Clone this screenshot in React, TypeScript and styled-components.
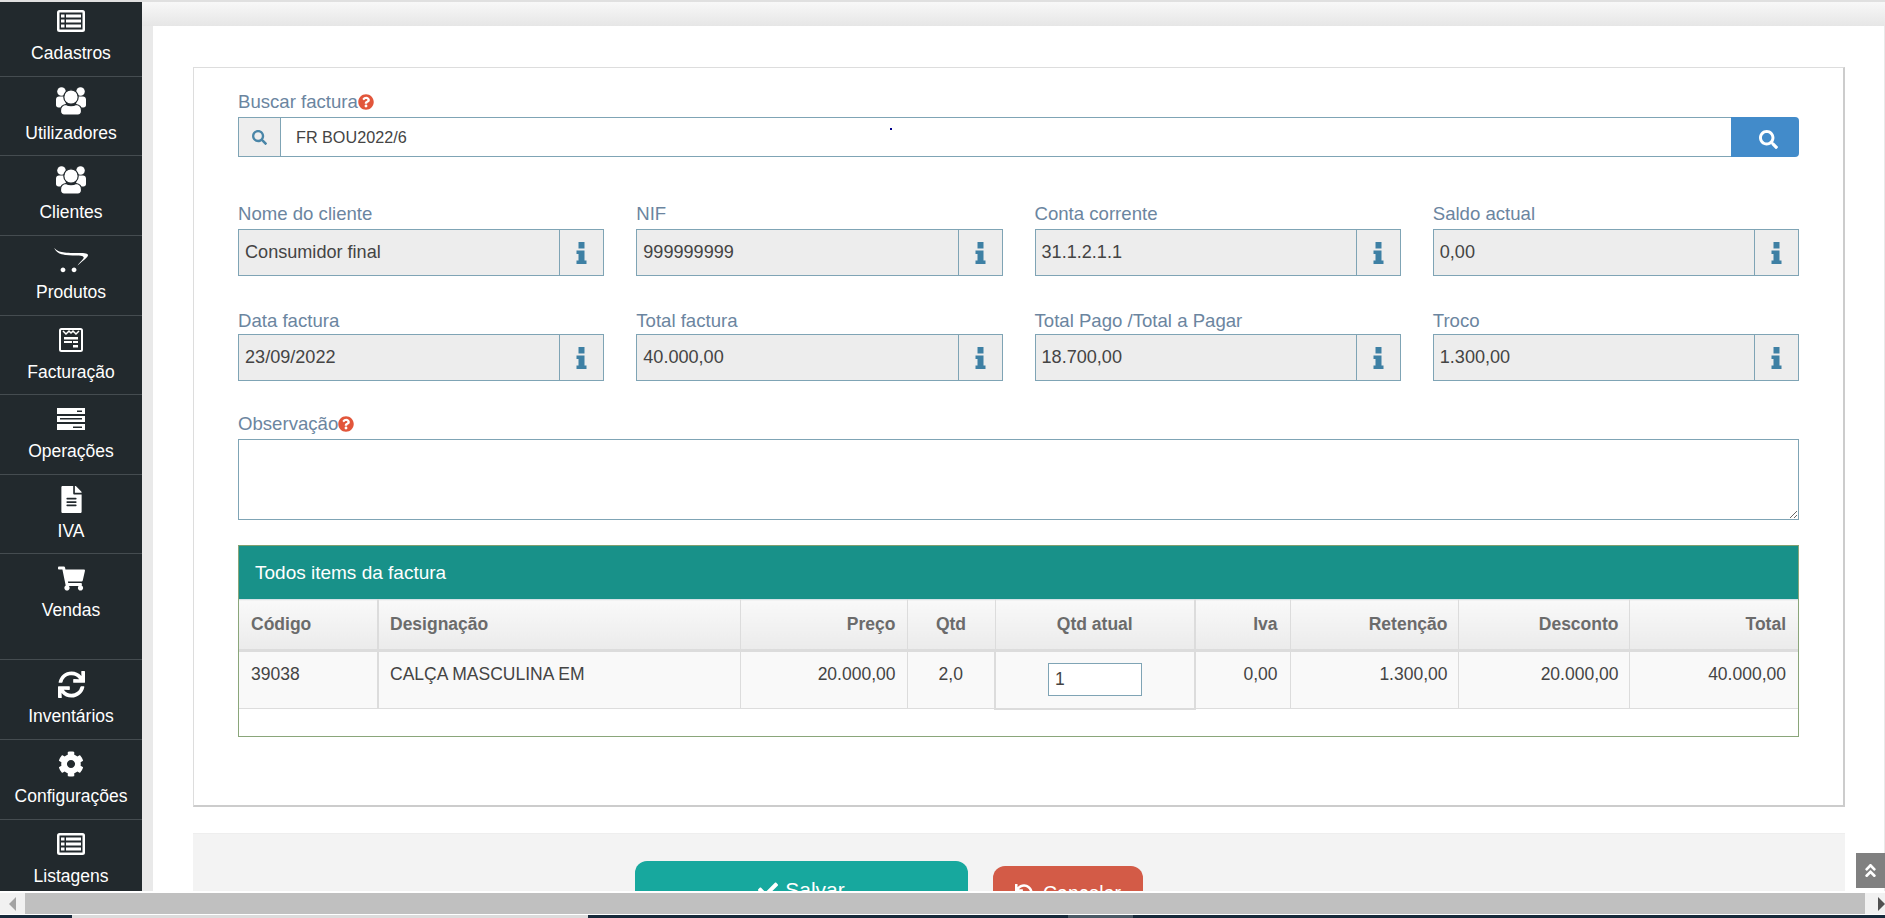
import React from 'react';
import styled, { createGlobalStyle, css } from 'styled-components';
import {
  FaAngleDoubleUp,
  FaCheck,
  FaCog,
  FaFileAlt,
  FaOpencart,
  FaQuestionCircle,
  FaSearch,
  FaShoppingCart,
  FaSync,
  FaUndo,
} from 'react-icons/fa';

const GlobalStyle = createGlobalStyle`
  html, body {
    margin: 0;
    padding: 0;
    height: 100%;
    overflow: hidden;
    background: #fff;
    font-family: 'Liberation Sans', Arial, sans-serif;
  }
  * { box-sizing: border-box; }
`;

// icones que nao existem no pacote
const UsersIcon = () => (
  <svg width="30" height="28" viewBox="0 0 30 28" fill="#fff">
    <circle cx="5.500" cy="4.500" r="4.300" />
    <circle cx="24.500" cy="4.500" r="4.300" />
    <path d="M0 12.500c0-2 1.300-3 3-3h5l2 7-4 4H2.500C1 20.500 0 19.500 0 18zM30 12.500c0-2-1.300-3-3-3h-5l-2 7 4 4h3.500c1.500 0 2.500-1 2.500-2.500z" />
    <circle cx="15" cy="10" r="7.200" stroke="#22292d" strokeWidth="1.200" />
    <path
      d="M10 17.500c1.400.8 3 1.200 5 1.200s3.600-.4 5-1.200c3.200.3 5.500 2.500 5.500 6.200v.6c0 2.300-1.500 3.700-3.500 3.700H8c-2 0-3.500-1.400-3.500-3.700v-.6c0-3.700 2.300-5.900 5.500-6.200z"
      stroke="#22292d"
      strokeWidth="1.200"
    />
  </svg>
);

const ListAltIcon = () => (
  <svg width="28" height="22" viewBox="0 0 28 22">
    <rect width="28" height="22" rx="2.500" fill="#fff" />
    <rect x="2.500" y="2.500" width="23" height="17" fill="#22292d" />
    <path
      fill="#fff"
      d="M4 4.500h3.500v3H4zM9 4.500h15v3H9zM4 9.500h3.500v3H4zM9 9.500h15v3H9zM4 14.500h3.500v3H4zM9 14.500h15v3H9z"
    />
  </svg>
);

const InvoiceIcon = () => (
  <svg width="24" height="24" viewBox="0 0 24 24">
    <rect x="1" y="1" width="22" height="22" rx="1.500" fill="none" stroke="#fff" strokeWidth="2" />
    <path d="M4 3l3 3 3-3 2 2 2-2 3 3 3-3" fill="none" stroke="#fff" strokeWidth="1.500" />
    <path d="M5 9h14v2.500H5zM5 13h8v2H5zM14 13h5v2h-5zM14 17h5v2.500h-5z" fill="#fff" />
  </svg>
);

const ServerIcon = () => (
  <svg width="28" height="22" viewBox="0 0 28 22">
    <path
      fill="#fff"
      fillRule="evenodd"
      d="M0 0h28v6H0zM20 2.500v1.500h5V2.500zM0 8h28v6H0zM3 10v1.500h22V10zM0 16h28v6H0zM16 18.500V20h9v-1.500z"
    />
  </svg>
);

const InfoIcon = () => (
  <svg width="11" height="22" viewBox="0 0 11 22" fill="#3e80a4">
    <path d="M2.500 0h6v6.500h-6z" />
    <path d="M.5 8.500h8v10h2V22H.5v-3.500h2v-6.500h-2z" />
  </svg>
);

type SidebarEntry = { label: string; icon: React.ReactNode; height: number; compact?: boolean };

const sidebarEntries: SidebarEntry[] = [
  { label: 'Cadastros', icon: <ListAltIcon />, height: 75, compact: true },
  { label: 'Utilizadores', icon: <UsersIcon />, height: 79 },
  { label: 'Clientes', icon: <UsersIcon />, height: 80 },
  { label: 'Produtos', icon: <FaOpencart size={34} />, height: 80 },
  { label: 'Facturação', icon: <InvoiceIcon />, height: 79 },
  { label: 'Operações', icon: <ServerIcon />, height: 80 },
  { label: 'IVA', icon: <FaFileAlt size={27} />, height: 79 },
  { label: 'Vendas', icon: <FaShoppingCart size={27} />, height: 106 },
  { label: 'Inventários', icon: <FaSync size={27} />, height: 80 },
  { label: 'Configurações', icon: <FaCog size={26} />, height: 80 },
  { label: 'Listagens', icon: <ListAltIcon />, height: 80 },
];

const readonlyFields = [
  { label: 'Nome do cliente', value: 'Consumidor final' },
  { label: 'NIF', value: '999999999' },
  { label: 'Conta corrente', value: '31.1.2.1.1' },
  { label: 'Saldo actual', value: '0,00' },
  { label: 'Data factura', value: '23/09/2022' },
  { label: 'Total factura', value: '40.000,00' },
  { label: 'Total Pago /Total a Pagar', value: '18.700,00' },
  { label: 'Troco', value: '1.300,00' },
];

export default function App() {
  return (
    <>
      <GlobalStyle />
      <Page>
        <Viewport>
          <Sidebar>
            {sidebarEntries.map((entry) => (
              <SidebarItem key={entry.label} $height={entry.height} $compact={entry.compact}>
                <SidebarIcon>{entry.icon}</SidebarIcon>
                <SidebarLabel>{entry.label}</SidebarLabel>
              </SidebarItem>
            ))}
          </Sidebar>
          <Main>
            <Panel>
              <Card>
                <Label $offset={2}>
                  Buscar factura
                  <HelpIcon />
                </Label>
                <SearchGroup>
                  <SearchPrefix>
                    <FaSearch size={15} />
                  </SearchPrefix>
                  <SearchInput defaultValue="FR BOU2022/6" />
                  <SearchButton>
                    <FaSearch size={19} />
                  </SearchButton>
                  <StrayDot />
                </SearchGroup>

                <FieldGrid>
                  {readonlyFields.map((field, index) => (
                    <div key={field.label}>
                      <Label $offset={index > 3 ? 6 : 2}>{field.label}</Label>
                      <FieldGroup>
                        <FieldValue>{field.value}</FieldValue>
                        <FieldAddon>
                          <InfoIcon />
                        </FieldAddon>
                      </FieldGroup>
                    </div>
                  ))}
                </FieldGrid>

                <ObservationBlock>
                  <Label $offset={2}>
                    Observação
                    <HelpIcon />
                  </Label>
                  <Observation />
                </ObservationBlock>

                <ItemsPanel>
                  <ItemsHeading>Todos items da factura</ItemsHeading>
                  <ItemsTable>
                    <colgroup>
                      <col style={{ width: 139 }} />
                      <col style={{ width: 362 }} />
                      <col style={{ width: 167 }} />
                      <col style={{ width: 88 }} />
                      <col style={{ width: 200 }} />
                      <col style={{ width: 95 }} />
                      <col style={{ width: 168 }} />
                      <col style={{ width: 171 }} />
                      <col />
                    </colgroup>
                    <thead>
                      <tr>
                        <HeadCell $thick>Código</HeadCell>
                        <HeadCell>Designação</HeadCell>
                        <HeadCell $align="right">Preço</HeadCell>
                        <HeadCell $align="center">Qtd</HeadCell>
                        <HeadCell $align="center" $thick>Qtd atual</HeadCell>
                        <HeadCell $align="right">Iva</HeadCell>
                        <HeadCell $align="right">Retenção</HeadCell>
                        <HeadCell $align="right">Desconto</HeadCell>
                        <HeadCell $align="right">Total</HeadCell>
                      </tr>
                    </thead>
                    <tbody>
                      <tr>
                        <BodyCell $thick>39038</BodyCell>
                        <BodyCell>CALÇA MASCULINA EM</BodyCell>
                        <BodyCell $align="right">20.000,00</BodyCell>
                        <BodyCell $align="center">2,0</BodyCell>
                        <QtyCell>
                          <QtyInput defaultValue="1" />
                        </QtyCell>
                        <BodyCell $align="right">0,00</BodyCell>
                        <BodyCell $align="right">1.300,00</BodyCell>
                        <BodyCell $align="right">20.000,00</BodyCell>
                        <BodyCell $align="right">40.000,00</BodyCell>
                      </tr>
                    </tbody>
                  </ItemsTable>
                </ItemsPanel>
              </Card>

              <ActionBar>
                <SaveButton>
                  <FaCheck size={20} /> Salvar
                </SaveButton>
                <CancelButton>
                  <FaUndo size={18} /> Cancelar
                </CancelButton>
              </ActionBar>
            </Panel>
            <ScrollTop>
              <FaAngleDoubleUp size={17} />
            </ScrollTop>
          </Main>
        </Viewport>
        <Scrollbar>
          <ScrollArrow $side="left" />
          <ScrollThumb />
          <ScrollArrow $side="right" />
        </Scrollbar>
        <Taskbar>
          <TaskSegment $width={72} $color="#16293a" />
          <TaskSegment $width={516} $color="#dcdcdc" />
          <TaskSegment $width={480} $color="#16293a" />
          <TaskSegment $width={65} $color="#4a5a66" />
          <TaskSegment $grow $color="#16293a" />
        </Taskbar>
      </Page>
    </>
  );
}

const Page = styled.div`
  width: 1885px;
  height: 918px;
  display: flex;
  flex-direction: column;
  overflow: hidden;
  background: #fff;
`;

const Viewport = styled.div`
  flex: none;
  height: 891px;
  display: flex;
  padding-top: 2px;
  background: #e0e0e0;
  overflow: hidden;
`;

const Sidebar = styled.nav`
  flex: none;
  width: 142px;
  background: #22292d;
  overflow: hidden;
`;

const SidebarItem = styled.div<{ $height: number; $compact?: boolean }>`
  height: ${({ $height }) => $height}px;
  padding-top: ${({ $compact }) => ($compact ? 3 : 8)}px;
  display: flex;
  flex-direction: column;
  align-items: center;
  border-bottom: 1px solid #454c50;
  color: #fff;
`;

const SidebarIcon = styled.div`
  height: 32px;
  display: flex;
  align-items: center;
  justify-content: center;
`;

const SidebarLabel = styled.div`
  margin-top: 4px;
  font-size: 17.5px;
  line-height: 24px;
  color: #fff;
`;

const Main = styled.main`
  position: relative;
  flex: 1;
  min-width: 0;
  padding: 24px 1px 0 11px;
  background: linear-gradient(#f8f8f8, #e6e6e6) top / 100% 24px no-repeat, #e9e9e9;
  overflow: hidden;
`;

const Panel = styled.div`
  height: 1000px;
  padding: 41px 39px 0 40px;
  background: #fff;
`;

const Card = styled.section`
  height: 740px;
  padding: 23px 44px 0 44px;
  background: #fff;
  border: 1px solid #dddddd;
  border-right: 2px solid #cccccc;
  border-bottom: 2px solid #cccccc;
`;

const Label = styled.label<{ $offset?: number }>`
  display: flex;
  align-items: center;
  height: 20px;
  padding-top: ${({ $offset }) => $offset || 0}px;
  margin-bottom: 6px;
  font-size: 18.6px;
  white-space: nowrap;
  color: #6b85a0;
`;

const HelpIcon = styled(FaQuestionCircle)`
  flex: none;
  width: 16px;
  height: 16px;
  color: #e2563b;
`;

const SearchGroup = styled.div`
  position: relative;
  display: flex;
  height: 40px;
`;

const SearchPrefix = styled.div`
  flex: none;
  width: 43px;
  display: flex;
  align-items: center;
  justify-content: center;
  background: #eeeeee;
  border: 1px solid #7fa4b5;
  color: #4a86a8;
`;

const SearchInput = styled.input`
  flex: 1;
  min-width: 0;
  height: 100%;
  padding: 0 15px;
  border: 1px solid #7fa4b5;
  border-left: none;
  border-right: none;
  outline: none;
  background: #fff;
  font-family: inherit;
  font-size: 16.2px;
  color: #444444;
`;

const SearchButton = styled.button`
  flex: none;
  width: 68px;
  display: flex;
  align-items: center;
  justify-content: center;
  padding: 5px 0 0 6px;
  border: none;
  border-radius: 0 4px 4px 0;
  background: #428bca;
  color: #fff;
`;

const StrayDot = styled.span`
  position: absolute;
  left: 652px;
  top: 11px;
  width: 2px;
  height: 2px;
  background: #00008b;
`;

const FieldGrid = styled.div`
  display: grid;
  grid-template-columns: repeat(4, 1fr);
  column-gap: 32px;
  row-gap: 32px;
  margin-top: 46px;
`;

const FieldGroup = styled.div`
  display: flex;
  height: 47px;
  background: #ededed;
  border: 1px solid #7fa4b5;
`;

const FieldValue = styled.div`
  flex: 1;
  min-width: 0;
  display: flex;
  align-items: center;
  padding: 0 6px 1px;
  font-size: 18.1px;
  color: #444444;
`;

const FieldAddon = styled.div`
  flex: none;
  width: 44px;
  display: flex;
  align-items: center;
  justify-content: center;
  border-left: 1px solid #7fa4b5;
`;

const ObservationBlock = styled.div`
  margin-top: 32px;
`;

const Observation = styled.textarea`
  display: block;
  width: 100%;
  height: 81px;
  border: 1px solid #7fa4b5;
  outline: none;
  background: #fff;
  resize: both;
`;

const ItemsPanel = styled.div`
  margin-top: 25px;
  height: 192px;
  border: 1px solid #8aa67a;
  border-top-color: #7f9f6f;
`;

const ItemsHeading = styled.div`
  height: 53px;
  padding: 0 16px;
  display: flex;
  align-items: center;
  background: #189189;
  font-size: 19px;
  color: #fff;
`;

const ItemsTable = styled.table`
  width: 100%;
  table-layout: fixed;
  border-collapse: collapse;
`;

// afinacao do espaco interno por coluna
const columnPadding = css`
  &:nth-child(2) {
    padding-left: 11px;
  }
  &:nth-child(3) {
    padding-right: 11px;
  }
  &:nth-child(7),
  &:nth-child(8) {
    padding-right: 10px;
  }
  &:last-child {
    border-right: none;
  }
`;

const HeadCell = styled.th<{ $align?: string; $thick?: boolean }>`
  height: 51px;
  padding: 0 12px;
  text-align: ${({ $align }) => $align || 'left'};
  background: linear-gradient(#f9f9f9, #ebebeb);
  border-top: 1px solid #d5e3e8;
  border-bottom: 3px solid #dcdcdc;
  border-right: ${({ $thick }) => ($thick ? '2px' : '1px')} solid #dcdcdc;
  font-size: 17.5px;
  font-weight: bold;
  color: #6b6b6b;
  ${columnPadding}
`;

const BodyCell = styled.td<{ $align?: string; $thick?: boolean }>`
  height: 58px;
  padding: 12px 12px 0;
  vertical-align: top;
  text-align: ${({ $align }) => $align || 'left'};
  background: #f9f9f9;
  border-bottom: 1px solid #dddddd;
  border-right: ${({ $thick }) => ($thick ? '2px' : '1px')} solid #dcdcdc;
  font-size: 17.5px;
  color: #444444;
  ${columnPadding}
`;

const QtyCell = styled.td`
  height: 58px;
  padding: 0;
  text-align: center;
  background: #f9f9f9;
  border: 2px solid #dcdcdc;
  border-top: none;
`;

const QtyInput = styled.input`
  display: inline-block;
  width: 94px;
  height: 33px;
  padding: 0 6px;
  border: 1px solid #7fa4b5;
  outline: none;
  background: #fff;
  font-family: inherit;
  font-size: 17.5px;
  color: #444444;
`;

const ActionBar = styled.div`
  display: flex;
  align-items: flex-start;
  gap: 25px;
  height: 120px;
  margin-top: 26px;
  padding: 27px 0 0 442px;
  background: #f3f3f3;
  border-top: 1px solid #eeeeee;
`;

const SaveButton = styled.button`
  width: 333px;
  height: 58px;
  display: flex;
  align-items: center;
  justify-content: center;
  gap: 7px;
  border: none;
  border-radius: 12px;
  background: #17a89e;
  font-family: inherit;
  font-size: 21px;
  color: #fff;
`;

const CancelButton = styled.button`
  width: 150px;
  height: 54px;
  margin-top: 5px;
  display: flex;
  align-items: center;
  justify-content: center;
  gap: 10px;
  border: none;
  border-radius: 12px;
  background: #d35b47;
  font-family: inherit;
  font-size: 19.5px;
  color: #fff;
`;

const ScrollTop = styled.div`
  position: absolute;
  right: 0;
  bottom: 3px;
  width: 29px;
  height: 35px;
  display: flex;
  align-items: center;
  justify-content: center;
  background: #808080;
  color: #fff;
`;

const Scrollbar = styled.div`
  flex: none;
  display: flex;
  height: 21px;
  margin: 2px 0 1px;
  background: #f1f1f1;
`;

const ScrollArrow = styled.div<{ $side: 'left' | 'right' }>`
  flex: none;
  width: ${({ $side }) => ($side === 'left' ? 25 : 20)}px;
  display: flex;
  align-items: center;
  justify-content: ${({ $side }) => ($side === 'left' ? 'center' : 'flex-end')};

  &::before {
    content: '';
    border-top: 7px solid transparent;
    border-bottom: 7px solid transparent;
    ${({ $side }) =>
      $side === 'left' ? 'border-right: 7px solid #a3a3a3;' : 'border-left: 7px solid #505050;'}
  }
`;

const ScrollThumb = styled.div`
  flex: 1;
  background: #c0c0c0;
`;

const Taskbar = styled.div`
  flex: 1;
  display: flex;
`;

const TaskSegment = styled.div<{ $width?: number; $grow?: boolean; $color: string }>`
  flex: ${({ $grow }) => ($grow ? 1 : 'none')};
  width: ${({ $width }) => ($width ? `${$width}px` : 'auto')};
  background: ${({ $color }) => $color};
`;
